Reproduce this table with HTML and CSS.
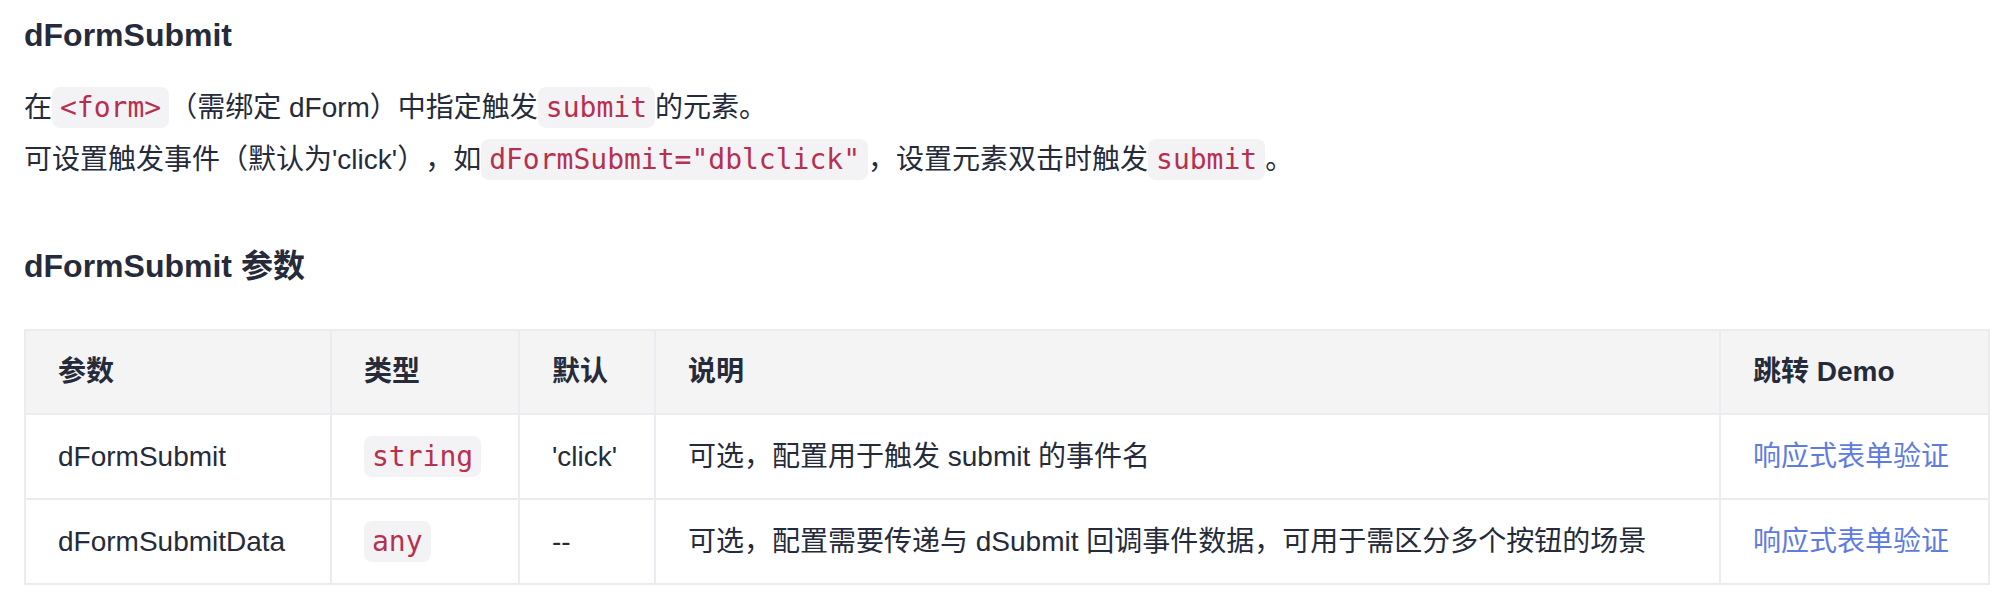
FILE: index.html
```html
<!DOCTYPE html>
<html lang="zh-CN">
<head>
<meta charset="utf-8">
<title>dFormSubmit</title>
<link rel="stylesheet" href="styles.css">
</head>
<body>
<main class="page">
  <h3 class="title">dFormSubmit</h3>
  <p class="line first">在<code class="code">&lt;form&gt;</code>（需绑定 dForm）中指定触发<code class="code">submit</code>的元素。</p>
  <p class="line">可设置触发事件（默认为'click'），如<code class="code">dFormSubmit="dblclick"</code>，设置元素双击时触发<code class="code">submit</code>。</p>
  <h3 class="title sub">dFormSubmit 参数</h3>
  <table class="params">
    <colgroup>
      <col class="c-name">
      <col class="c-type">
      <col class="c-def">
      <col class="c-desc">
      <col class="c-demo">
    </colgroup>
    <thead>
      <tr>
        <th>参数</th>
        <th>类型</th>
        <th>默认</th>
        <th>说明</th>
        <th>跳转 Demo</th>
      </tr>
    </thead>
    <tbody>
      <tr>
        <td>dFormSubmit</td>
        <td><code class="code">string</code></td>
        <td>'click'</td>
        <td>可选，配置用于触发 submit 的事件名</td>
        <td><a class="link" href="#">响应式表单验证</a></td>
      </tr>
      <tr>
        <td>dFormSubmitData</td>
        <td><code class="code">any</code></td>
        <td>--</td>
        <td>可选，配置需要传递与 dSubmit 回调事件数据，可用于需区分多个按钮的场景</td>
        <td><a class="link" href="#">响应式表单验证</a></td>
      </tr>
    </tbody>
  </table>
</main>
</body>
</html>
```

FILE: styles.css
```css
html, body {
  margin: 0;
  padding: 0;
  background: #ffffff;
}

body {
  font-family: "Liberation Sans", "Noto Sans CJK SC", sans-serif;
  font-size: 28px;
  color: #252b3a;
  text-spacing-trim: space-all;
}

.page {
  padding: 13px 24px 0 24px;
}

.title {
  margin: 0;
  font-size: 32px;
  line-height: 44px;
  font-weight: 700;
  color: #252b3a;
}

.title.sub {
  margin-top: 58px;
}

.line {
  margin: 0;
  line-height: 52px;
}

.line.first {
  margin-top: 25px;
}

.code {
  display: inline-block;
  font-family: "DejaVu Sans Mono", monospace;
  font-size: 28px;
  line-height: 41px;
  padding: 0 8px;
  border-radius: 8px;
  background: #f3f3f5;
  color: #b8304f;
  vertical-align: baseline;
}

.params {
  margin-top: 41px;
  width: 1964px;
  table-layout: fixed;
  border-collapse: collapse;
  border: 2px solid #ebebf0;
}

.c-name { width: 306px; }
.c-type { width: 188px; }
.c-def { width: 136px; }
.c-desc { width: 1065px; }
.c-demo { width: 269px; }

.params th,
.params td {
  border: 2px solid #ebebf0;
  padding: 21px 32px;
  height: 40px;
  line-height: 40px;
  text-align: left;
  vertical-align: middle;
  white-space: nowrap;
}

.params th {
  background: #f4f4f5;
  font-weight: 700;
}

.link {
  color: #5e7ce0;
  text-decoration: none;
}
```
